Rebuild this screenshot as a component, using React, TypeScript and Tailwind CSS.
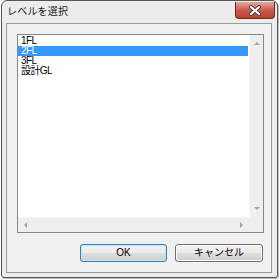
import React from 'react';

const levels = ['1FL', '2FL', '3FL', '設計GL'];
const SELECTED = 1;

const uiFont = "font-['MS_UI_Gothic','Liberation_Sans','Noto_Sans_CJK_JP',sans-serif]";

function Arrow({ dir }: { dir: 'up' | 'down' | 'left' | 'right' }) {
  const points = {
    up: '0,3 3,0 6,3',
    down: '0,0 6,0 3,3',
    left: '3,0 3,6 0,3',
    right: '0,0 0,6 3,3',
  }[dir];
  const vertical = dir === 'up' || dir === 'down';
  return (
    <svg width={vertical ? 6 : 3} height={vertical ? 3 : 6} viewBox={vertical ? '0 0 6 3' : '0 0 3 6'}>
      <polygon points={points} fill="#a6a6a6" />
    </svg>
  );
}

function CloseButton() {
  return (
    <div className="mt-[1px] w-[40px] h-[17px] rounded-b-[4px] border border-t-0 border-[#6b2a22] bg-gradient-to-b from-[#e3a79d] via-[#cb5b4d] to-[#b9432f] flex items-center justify-center">
      <svg width="14" height="11" viewBox="0 0 14 11">
        <path d="M3 2 L11 9 M11 2 L3 9" stroke="#4a4a4a" strokeWidth="4" strokeLinecap="round" />
        <path d="M3 2 L11 9 M11 2 L3 9" stroke="#ffffff" strokeWidth="2" strokeLinecap="round" />
      </svg>
    </div>
  );
}

function WinButton({ label, isDefault }: { label: string; isDefault?: boolean }) {
  return (
    <button
      className={`h-[18px] rounded-[3px] border ${isDefault ? 'w-[87px] border-[#3c7fb1] shadow-[inset_0_0_0_1px_#bfe6f7]' : 'w-[88px] border-[#707070] shadow-[inset_0_0_0_1px_#fbfbfb]'} bg-[linear-gradient(to_bottom,#f2f2f2_0%,#ebebeb_50%,#dddddd_51%,#cfcfcf_100%)] text-[10px] leading-none text-black flex items-center justify-center`}
    >
      {label}
    </button>
  );
}

export default function App() {
  return (
    <div className={`w-[280px] h-[280px] bg-white ${uiFont}`}>
      <div className="ml-[1px] w-[277px] h-[278px] rounded-t-[6px] rounded-b-[3px] border border-[#555555] bg-[#ececec] flex flex-col shadow-[1px_1px_0_#bdbdbd]">
        {/* Title bar */}
        <div className="h-[22px] flex items-start justify-between pl-[5px] pr-[2px]">
          <span className="mt-[5px] text-[10px] leading-[12px] text-[#1a1a1a] tracking-[0.2px]">レベルを選択</span>
          <CloseButton />
        </div>

        {/* Client area */}
        <div className="ml-[4px] mr-[5px] mb-[4px] flex-1 border border-[#9a9a9a] bg-[#f0f0f0] pl-[10px] pt-[10px] flex flex-col">
          {/* List box */}
          <div className="w-[247px] h-[199px] border border-[#828790] bg-white grid grid-cols-[1fr_14px] grid-rows-[1fr_15px]">
            <div className="pt-[1px] pr-[1px] overflow-hidden">
              {levels.map((level, i) => (
                <div
                  key={level}
                  className={`h-[10px] pl-[3px] text-[10px] leading-[10px] tracking-[-0.6px] ${i === SELECTED ? 'bg-[#3399ff] text-white' : 'text-black'}`}
                >
                  {level}
                </div>
              ))}
            </div>

            {/* Vertical scrollbar */}
            <div className="bg-[#efefef] border-l border-[#f7f7f7] flex flex-col items-center justify-between py-[7px]">
              <Arrow dir="up" />
              <Arrow dir="down" />
            </div>

            {/* Horizontal scrollbar */}
            <div className="bg-[#efefef] border-t border-[#f7f7f7] flex items-center justify-between px-[6px]">
              <Arrow dir="left" />
              <Arrow dir="right" />
            </div>
            <div className="bg-[#efefef]" />
          </div>

          {/* Buttons */}
          <div className="w-[247px] mt-[11px] flex justify-end gap-[8px] pr-[1px]">
            <WinButton label="OK" isDefault />
            <WinButton label="キャンセル" />
          </div>
        </div>
      </div>
    </div>
  );
}
